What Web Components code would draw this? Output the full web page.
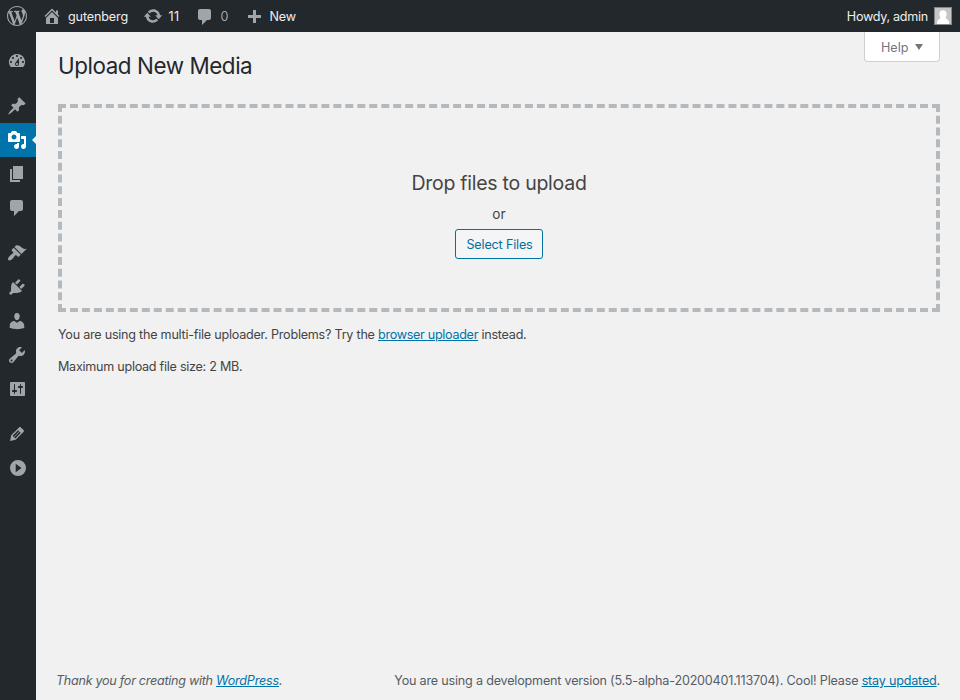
<!DOCTYPE html>
<html lang="en">
<head>
<meta charset="utf-8">
<title>Upload New Media</title>
<style>
html,body{margin:0;height:100%;background:#f1f1f1}
body{font:12.6px/1.5 Inter,"Liberation Sans",sans-serif;color:#444;overflow:hidden}
</style>
</head>
<body>
<admin-app></admin-app>
<script>
const ICONS = {
wordpress:'M20 10c0-5.51-4.49-10-10-10C4.48 0 0 4.49 0 10c0 5.52 4.48 10 10 10 5.51 0 10-4.48 10-10zM7.78 15.37L4.37 6.22c.55-.02 1.17-.08 1.17-.08.5-.06.44-1.13-.06-1.11 0 0-1.45.11-2.37.11-.18 0-.37 0-.58-.01C4.12 2.69 6.87 1.11 10 1.11c2.33 0 4.45.87 6.05 2.34-.68-.11-1.65.39-1.65 1.58 0 .74.45 1.36.9 2.1.35.61.55 1.36.55 2.46 0 1.49-1.4 5-1.4 5l-3.03-8.37c.54-.02.82-.17.82-.17.5-.05.44-1.25-.06-1.22 0 0-1.44.12-2.38.12-.87 0-2.33-.12-2.33-.12-.5-.03-.56 1.2-.06 1.22l.92.08 1.26 3.41zM17.41 10c.24-.64.74-1.87.43-4.25.7 1.29 1.05 2.71 1.05 4.25 0 3.29-1.73 6.24-4.4 7.78.97-2.59 1.94-5.2 2.92-7.78zM6.1 18.09C3.12 16.65 1.11 13.53 1.11 10c0-1.3.23-2.48.72-3.59C3.25 10.3 4.67 14.2 6.1 18.09zm4.03-6.63l2.58 6.98c-.86.29-1.76.45-2.71.45-.79 0-1.57-.11-2.29-.33.81-2.38 1.62-4.74 2.42-7.1z',
home:'M16 8.5l1.53 1.53-1.06 1.06L10 4.6l-6.47 6.49-1.06-1.06L10 2.5l4 4v-2h2v4zm-6-2.46l6 5.99V18H4v-5.97zM12 17v-5H8v5h4z',
update:'M10.2 3.28c3.53 0 6.43 2.61 6.92 6h2.08l-3.5 4-3.5-4h2.32c-.45-1.97-2.21-3.45-4.32-3.45-1.45 0-2.73.71-3.54 1.78L4.95 5.66C6.23 4.2 8.11 3.28 10.2 3.28zm-.4 13.44c-3.52 0-6.43-2.61-6.92-6H.8l3.5-4c1.17 1.33 2.33 2.67 3.5 4H5.48c.45 1.97 2.21 3.45 4.32 3.45 1.45 0 2.73-.71 3.54-1.78l1.71 1.95c-1.28 1.46-3.15 2.38-5.25 2.38z',
comment:'M5 2h9c1.1 0 2 .9 2 2v7c0 1.1-.9 2-2 2h-2l-5 5v-5H5c-1.1 0-2-.9-2-2V4c0-1.1.9-2 2-2z',
plus:'M17 7v3h-5v5H9v-5H4V7h5V2h3v5h5z',
dashboard:'M3.76 16h12.48A7.998 7.998 0 0 0 10 3a7.998 7.998 0 0 0-6.24 13zM10 4c.55 0 1 .45 1 1s-.45 1-1 1-1-.45-1-1 .45-1 1-1zM6 6c.55 0 1 .45 1 1s-.45 1-1 1-1-.45-1-1 .45-1 1-1zm8 0c.55 0 1 .45 1 1s-.45 1-1 1-1-.45-1-1 .45-1 1-1zm-5.37 5.55L12 7v6c0 1.1-.9 2-2 2s-2-.9-2-2c0-.57.24-1.08.63-1.45zM4 10c.55 0 1 .45 1 1s-.45 1-1 1-1-.45-1-1 .45-1 1-1zm12 0c.55 0 1 .45 1 1s-.45 1-1 1-1-.45-1-1 .45-1 1-1zm-5 3c0-.55-.45-1-1-1s-1 .45-1 1 .45 1 1 1 1-.45 1-1z',
post:'M10.44 3.02l1.82-1.82 6.36 6.35-1.83 1.82c-1.05-.68-2.48-.57-3.41.36l-.75.75c-.92.93-1.04 2.35-.35 3.41l-1.83 1.82-2.41-2.41-2.8 2.79c-.42.42-3.38 2.71-3.8 2.29s1.86-3.39 2.28-3.81l2.79-2.79L4.1 9.36l1.83-1.82c1.05.69 2.48.57 3.4-.36l.75-.75c.93-.92 1.05-2.35.36-3.41z',
media:'M13 11V4c0-.55-.45-1-1-1h-1.67L9 1H5L3.67 3H2c-.55 0-1 .45-1 1v7c0 .55.45 1 1 1h10c.55 0 1-.45 1-1zM7 4.5c1.38 0 2.5 1.12 2.5 2.5S8.38 9.5 7 9.5 4.5 8.38 4.5 7 5.62 4.5 7 4.5zM14 6h5v10.5c0 1.38-1.12 2.5-2.5 2.5S14 17.88 14 16.5s1.12-2.5 2.5-2.5c.17 0 .34.02.5.05V9h-3V6zm-4 8.05V13h2v3.5c0 1.38-1.12 2.5-2.5 2.5S7 17.88 7 16.5 8.12 14 9.5 14c.17 0 .34.02.5.05z',
page:'M6 15V2h10v13H6zm-1 1h8v2H3V5h2v11z',
appearance:'M14.48 11.06L7.41 3.99l1.5-1.5c.5-.56 2.3-.47 3.51.32 1.21.8 1.43 1.28 2.91 2.1 1.18.64 2.45 1.26 4.45.85zm-.71.71L6.7 4.7 4.93 6.47c-.39.39-.39 1.02 0 1.41l1.06 1.06c.39.39.39 1.03 0 1.42-.6.6-1.43 1.11-2.21 1.69-.35.26-.7.53-1.01.84C1.43 14.23.4 16.08 1.4 17.07c.99 1 2.84-.03 4.18-1.36.31-.31.58-.66.85-1.02.57-.78 1.08-1.61 1.69-2.21.39-.39 1.02-.39 1.41 0l1.06 1.06c.39.39 1.02.39 1.41 0z',
plugin:'M13.11 4.36L9.87 7.6 8 5.73l3.24-3.24c.35-.34 1.05-.2 1.56.32.52.51.66 1.21.31 1.55zm-8 1.77l.91-1.12 9.01 9.01-1.19.84c-.71.71-2.63 1.16-3.82 1.16H6.14L4.9 17.26c-.59.59-1.54.59-2.12 0-.59-.58-.59-1.53 0-2.12l1.24-1.24v-3.88c0-1.13.4-3.19 1.09-3.89zm7.26 3.97l3.24-3.24c.34-.35 1.04-.21 1.55.31.52.51.66 1.21.31 1.55l-3.24 3.25z',
user:'M10 9.25c-2.27 0-2.73-3.44-2.73-3.44C7 4.02 7.82 2 9.97 2c2.16 0 2.98 2.02 2.71 3.81 0 0-.41 3.44-2.68 3.44zm0 2.57L12.72 10c2.39 0 4.52 2.33 4.52 4.53v2.49s-3.65 1.13-7.24 1.13c-3.65 0-7.24-1.13-7.24-1.13v-2.49c0-2.25 1.94-4.48 4.47-4.48z',
tools:'M16.68 9.77c-1.34 1.34-3.3 1.67-4.95.99l-5.41 6.52c-.99.99-2.59.99-3.58 0s-.99-2.59 0-3.57l6.52-5.42c-.68-1.65-.35-3.61.99-4.95 1.28-1.28 3.12-1.62 4.72-1.06l-2.89 2.89 2.82 2.82 2.86-2.87c.53 1.58.18 3.39-1.08 4.65zM3.81 16.21c.4.39 1.04.39 1.43 0 .4-.4.4-1.04 0-1.43-.39-.4-1.03-.4-1.43 0-.39.39-.39 1.03 0 1.43z',
settings:'M18 16V4c0-.55-.45-1-1-1H4c-.55 0-1 .45-1 1v12c0 .55.45 1 1 1h13c.55 0 1-.45 1-1zM8 11h1c.55 0 1 .45 1 1s-.45 1-1 1H8v1.5c0 .28-.22.5-.5.5s-.5-.22-.5-.5V13H6c-.55 0-1-.45-1-1s.45-1 1-1h1V5.5c0-.28.22-.5.5-.5s.5.22.5.5V11zm5-2h-1c-.55 0-1-.45-1-1s.45-1 1-1h1V5.5c0-.28.22-.5.5-.5s.5.22.5.5V7h1c.55 0 1 .45 1 1s-.45 1-1 1h-1v5.5c0 .28-.22.5-.5.5s-.5-.22-.5-.5V9z',
edit:'M13.89 3.39l2.71 2.72c.46.46.42 1.24.03 1.64l-8.01 8.02-5.56 1.16 1.16-5.58s7.6-7.63 7.99-8.03c.39-.39 1.22-.39 1.68.07zm-2.73 2.79l-5.59 5.61 1.11 1.11 5.54-5.65zm-2.97 8.23l5.58-5.6-1.07-1.08-5.59 5.6z',
collapse:'M11 2a8 8 0 1 1 0 16a8 8 0 1 1 0-16zM8.7 5.8v8.4l5.8-4.2z'
};
const define = (name, html, sync) => {
  const t = document.createElement('template');
  t.innerHTML = html;
  customElements.define(name, class extends HTMLElement {
    static observedAttributes = ['name', 'icon'];
    constructor(){ super(); this.attachShadow({mode:'open'}).append(document.importNode(t.content, true)); }
    attributeChangedCallback(attr, old, value){ if (sync) sync(this.shadowRoot, value); }
  });
};
const passIcon = (root, value) => root.querySelector('dash-icon').setAttribute('name', value);
define('dash-icon', `<style>:host{display:block;flex:none;width:20px;height:20px}svg{display:block;width:20px;height:20px;fill:currentColor}</style><svg viewBox="0 0 20 20"><path fill-rule="evenodd"/></svg>`,
  (root, value) => root.querySelector('path').setAttribute('d', ICONS[value] || ''));
define('bar-item', `<style>:host{display:flex;height:32px;line-height:33px;align-items:flex-start;color:#eee;white-space:nowrap}dash-icon{color:#a0a5aa;margin-top:var(--icon-top,7px)}span{margin-left:var(--gap,6px);letter-spacing:var(--track,0)}</style><dash-icon></dash-icon><span><slot></slot></span>`, passIcon);
define('user-avatar', `<style>:host{display:block;width:16px;height:16px;border:1px solid #82878c;background:#c6c6c6}svg{display:block}</style><svg width="16" height="16" viewBox="0 0 16 16" fill="#fff"><ellipse cx="8" cy="6.3" rx="3.6" ry="4"/><path d="M5.8 8h4.4c.2 2.2.8 2.7 2 3.3 1.5.8 1.7 2.4 1.8 4.7H2c.1-2.3.3-3.9 1.8-4.7 1.2-.6 1.8-1.1 2-3.3z"/></svg>`);
define('admin-bar', `<style>
:host{display:flex;height:32px;background:#23282d;color:#eee;line-height:33px}
nav{display:flex;flex:1;padding-left:7px}
.account{display:flex;gap:6px;padding-right:8px}
.account span{letter-spacing:-.28px}
user-avatar{margin-top:7px}
</style><nav>
<bar-item icon="wordpress" style="--icon-top:6px;width:35px"></bar-item>
<bar-item icon="home" style="--icon-top:6px;width:100.5px;--track:-.14px">gutenberg</bar-item>
<bar-item icon="update" style="--icon-top:6px;width:52px;--track:.4px">11</bar-item>
<bar-item icon="comment" style="width:49px;color:#a0a5aa">0</bar-item>
<bar-item icon="plus" style="--icon-top:8px;--track:-.15px">New</bar-item>
</nav><div class="account"><span>Howdy, admin</span><user-avatar></user-avatar></div>`);
define('menu-item', `<style>:host{display:block;box-sizing:border-box;height:34px;padding:7px;color:#a0a5aa;position:relative}
:host([gap]){margin-top:11px}
:host([active]){background:#0073aa;color:#fff}
:host([active])::after{content:"";position:absolute;right:0;top:13px;border:4px solid transparent;border-left:0;border-right-color:#f1f1f1}</style><dash-icon></dash-icon>`, passIcon);
define('admin-menu', `<style>:host{display:block;width:36px;background:#23282d;padding-top:12px;box-sizing:border-box}</style>
<menu-item icon="dashboard"></menu-item>
<menu-item icon="post" gap></menu-item><menu-item icon="media" active></menu-item><menu-item icon="page"></menu-item><menu-item icon="comment"></menu-item>
<menu-item icon="appearance" gap></menu-item><menu-item icon="plugin"></menu-item><menu-item icon="user"></menu-item><menu-item icon="tools"></menu-item><menu-item icon="settings"></menu-item>
<menu-item icon="edit" gap></menu-item><menu-item icon="collapse"></menu-item>`);
define('help-tab', `<style>:host{display:flex;box-sizing:border-box;width:76px;height:30px;padding-left:16px;border:1px solid #ccd0d4;border-top:0;border-radius:0 0 4px 4px;background:#fff;color:#72777c;line-height:31px}
i{width:0;height:0;border:4.5px solid transparent;border-top:6.5px solid #72777c;border-bottom:0;margin:12px 0 0 6.5px}</style><slot></slot><i></i>`);
define('drop-zone', `<style>:host{display:flex;flex-direction:column;align-items:center;box-sizing:border-box;height:208px;border:4px dashed #b4b9be;color:#444}
h2{margin:61px 0 0;font-size:19.5px;font-weight:400;line-height:28px;height:28px;white-space:nowrap;letter-spacing:-.26px}
p{margin:7px 0 0;font-size:13.6px;line-height:20px}
button{margin:5px 0 0;box-sizing:border-box;height:30px;width:88px;padding:1px 0 0 1px;border:1px solid #0071a1;border-radius:3px;background:#f3f5f6;color:#0071a1;font:inherit;line-height:28px;white-space:nowrap;letter-spacing:-.17px}</style>
<h2>Drop files to upload</h2><p>or</p><button>Select Files</button>`);
define('page-footer', `<style>:host{display:flex;justify-content:space-between;margin-left:-2px;color:#555d66;white-space:nowrap;line-height:20px;letter-spacing:-.2px}a{color:#0073aa;text-decoration:underline}em{letter-spacing:-.28px}em a{letter-spacing:-.2px}</style>
<em>Thank you for creating with <a>WordPress</a>.</em><div>You are using a development version (5.5-alpha-20200401.113704). Cool! Please <a>stay updated</a>.</div>`);
define('upload-page', `<style>:host{display:flex;flex-direction:column;flex:1;padding:0 20px 9px 22px;box-sizing:border-box}
header{display:flex;justify-content:space-between;height:72px}
h1{margin:19px 0 0;font-size:22.4px;font-weight:400;line-height:30px;height:30px;color:#23282d;letter-spacing:-.43px}
p{margin:0;line-height:20px;white-space:nowrap;letter-spacing:-.24px}a{color:#0073aa;text-decoration:underline;letter-spacing:-.3px}
.one{margin-top:13px}.two{margin-top:12px;flex:1;letter-spacing:-.27px}</style>
<header><h1>Upload New Media</h1><help-tab>Help</help-tab></header>
<drop-zone></drop-zone>
<p class="one">You are using the multi-file uploader. Problems? Try the <a>browser uploader</a> instead.</p>
<p class="two">Maximum upload file size: 2 MB.</p>
<page-footer></page-footer>`);
define('admin-app', `<style>:host{display:flex;flex-direction:column;height:700px;width:960px}main{display:flex;flex:1}</style><admin-bar></admin-bar><main><admin-menu></admin-menu><upload-page></upload-page></main>`);
</script>
</body>
</html>
